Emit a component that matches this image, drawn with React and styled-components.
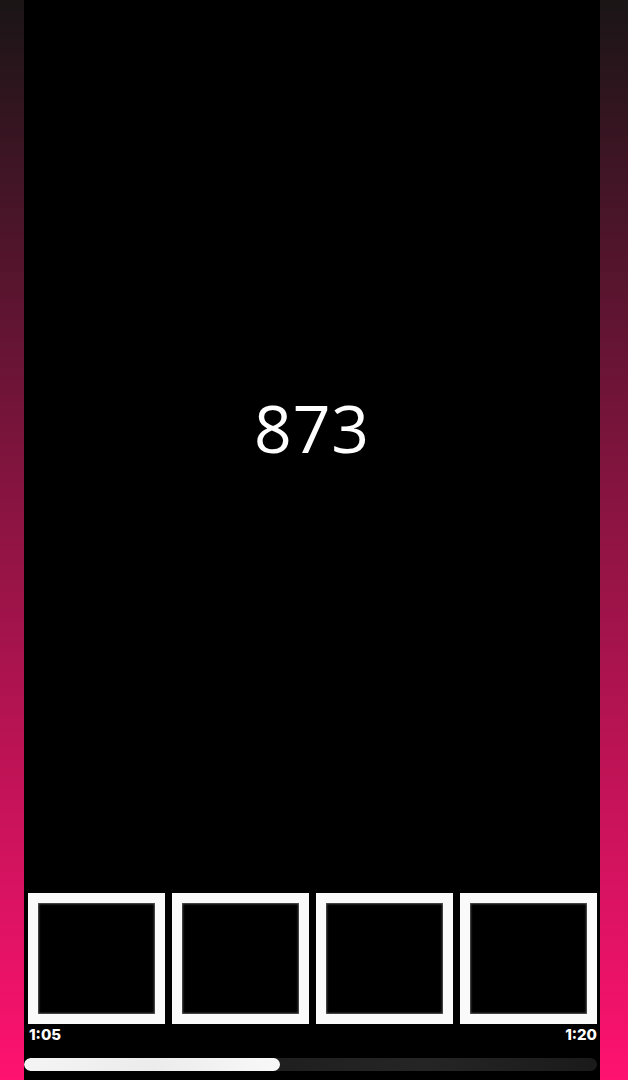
import styled, { createGlobalStyle } from 'styled-components';

const GlobalStyle = createGlobalStyle`
  html, body {
    margin: 0;
    padding: 0;
  }
  body {
    background: linear-gradient(180deg, #1a1516 0%, #8c1442 48%, #ff1270 100%);
    min-height: 1080px;
    font-family: 'Open Sans', sans-serif;
  }
`;

const Page = styled.div`
  display: flex;
  height: 1080px;
  padding: 0 28px 0 24px;
  box-sizing: border-box;
`;

const Screen = styled.div`
  flex: 1;
  display: flex;
  flex-direction: column;
  background: #000;
  padding-bottom: 9px;
`;

const Stage = styled.div`
  flex: 1;
  display: flex;
  align-items: center;
  justify-content: center;
  padding-bottom: 40px;
`;

const Counter = styled.div`
  color: #fff;
  font-family: 'Open Sans', sans-serif;
  font-size: 66px;
  font-weight: 500;
  letter-spacing: 1px;
  line-height: 1;
`;

const Strip = styled.div`
  display: grid;
  grid-template-columns: repeat(4, 1fr);
  gap: 7px;
  padding: 0 3px 0 4px;
`;

const Frame = styled.div`
  height: 131px;
  box-sizing: border-box;
  border: 10px solid #fafafa;
  background: #000;
  box-shadow: inset 0 0 2px 1px rgba(255, 255, 255, 0.35);
`;

const Times = styled.div`
  display: flex;
  justify-content: space-between;
  padding: 2px 3px 0 5px;
  height: 32px;
  color: #fff;
  font-family: 'Inter', 'Liberation Sans', sans-serif;
  font-weight: 800;
  font-size: 15px;
  line-height: 18px;
`;

const Track = styled.div`
  height: 13px;
  margin-right: 3px;
  border-radius: 7px;
  background: linear-gradient(90deg, #2a2a2a, #1e1e1e 40%, #252525 70%, #1a1a1a);
  overflow: hidden;
`;

const Fill = styled.div`
  height: 100%;
  border-radius: 7px;
  background: linear-gradient(90deg, #f4f4f4, #ececec 50%, #f8f8f8);
`;

export default function App() {
  const progress = 256 / 573;
  return (
    <>
      <GlobalStyle />
      <Page>
        <Screen>
          <Stage>
            <Counter>873</Counter>
          </Stage>
          <Strip>
            {[0, 1, 2, 3].map(i => <Frame key={i} />)}
          </Strip>
          <Times>
            <span>1:05</span>
            <span>1:20</span>
          </Times>
          <Track>
            <Fill style={{ width: `${progress * 100}%` }} />
          </Track>
        </Screen>
      </Page>
    </>
  );
}
